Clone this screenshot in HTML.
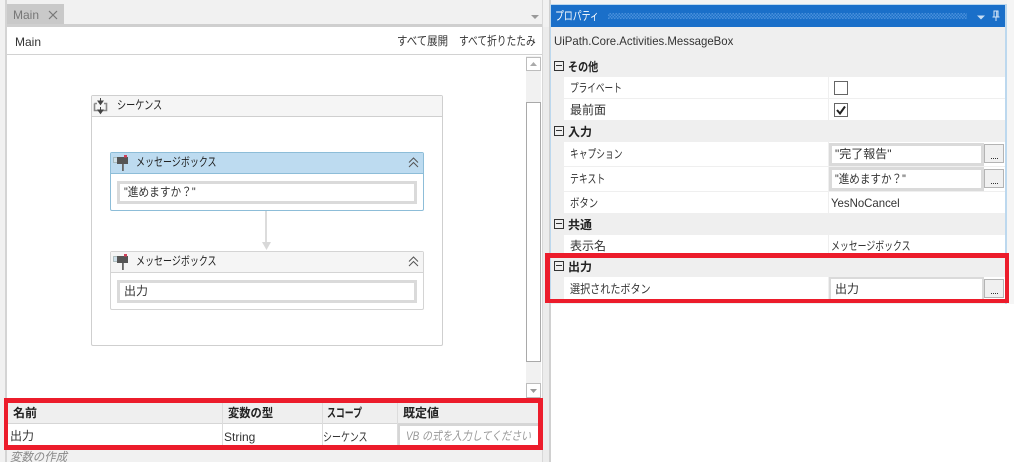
<!DOCTYPE html>
<html lang="ja"><head><meta charset="utf-8">
<style>
html,body{margin:0;padding:0;background:#fff}
#p{position:relative;width:1014px;height:462px;overflow:hidden;background:#fff;font-family:"Liberation Sans","Noto Sans CJK JP",sans-serif;font-size:12px;color:#333}
#p div,#p svg{position:absolute}
.t{white-space:nowrap;line-height:16px;transform-origin:0 0}
.b{font-weight:700;color:#222}
.g{background:#efefef}
.w{background:#fff}
.inp{background:#fff;border:3px solid #dadada;box-sizing:border-box}
.btn{background:#f0f0f0;border:1px solid #b4b4b4;box-sizing:border-box;width:20px;height:19px}
.btn:after{content:"";position:absolute;left:6px;top:13px;width:7px;height:1px;border-top:1px dotted #333}
.pm{width:10px;height:10px;border:1px solid #333;box-sizing:border-box;left:554px}
.pm:after{content:"";position:absolute;left:1px;top:3px;width:6px;height:1px;background:#333}
.red{background:#ec1c2b}
</style></head><body><div id="p">
<!-- left pane chrome -->
<div style="left:0;top:0;width:551px;height:462px;background:#f1f1f1"></div>
<div style="left:551px;top:0;width:463px;height:5px;background:#f3f3f3"></div>
<div style="left:1007px;top:0;width:7px;height:304px;background:#f5f5f5"></div>
<div style="left:5px;top:0;width:2px;height:462px;background:#d4d4d4"></div>
<div style="left:7px;top:4px;width:57px;height:20px;background:#c9c9c9"></div>
<div class="t" style="left:13px;top:7px;color:#777">Main</div>
<svg style="left:48px;top:10px" width="10" height="10"><path d="M1 1L9 9M9 1L1 9" stroke="#777" stroke-width="1.2"/></svg>
<div style="left:7px;top:24px;width:536px;height:3px;background:#cfcfcf"></div>
<svg style="left:530px;top:15px" width="10" height="6"><path d="M1 0H9L5 4Z" fill="#999"/></svg>
<div class="w" style="left:7px;top:27px;width:535px;height:423px"></div>
<div class="t" style="left:15px;top:34px">Main</div>
<div class="t" style="left:397px;top:33px;transform:scaleX(.87)">すべて展開</div>
<div class="t" style="left:459px;top:33px;transform:scaleX(.81)">すべて折りたたみ</div>
<div style="left:7px;top:54px;width:535px;height:1px;background:#d2d2d2"></div>
<div style="left:542px;top:0;width:1px;height:462px;background:#d8d8d8"></div>
<div style="left:543px;top:27px;width:6px;height:435px;background:#ececec"></div>
<div style="left:549px;top:0;width:2px;height:462px;background:#d0d0d0"></div>
<!-- scrollbar -->
<div style="left:526px;top:56px;width:15px;height:342px;background:#f1f1f1"></div>
<div style="left:526px;top:57px;width:15px;height:14px;background:#fff;border:1px solid #bdbdbd;box-sizing:border-box"></div>
<svg style="left:529px;top:61px" width="9" height="6"><path d="M1 5H8L4.500 1Z" fill="#aaa"/></svg>
<div style="left:526px;top:102px;width:15px;height:260px;background:#fff;border:1px solid #a9a9a9;box-sizing:border-box"></div>
<div style="left:526px;top:383px;width:15px;height:15px;background:#fff;border:1px solid #bdbdbd;box-sizing:border-box"></div>
<svg style="left:529px;top:388px" width="9" height="6"><path d="M1 1H8L4.500 5Z" fill="#999"/></svg>
<!-- sequence -->
<div style="left:91px;top:95px;width:352px;height:251px;border:1px solid #cfcfcf;border-radius:2px;box-sizing:border-box;background:#fff"></div>
<div style="left:92px;top:96px;width:350px;height:20px;background:#f5f5f5;border-bottom:1px solid #cfcfcf"></div>
<svg style="left:93px;top:97px" width="16" height="18"><path d="M1.500 6.500V13.500H13.500V6.500H11M4 6.500H1.500" fill="none" stroke="#888" stroke-width="1.600"/><path d="M7.500 1V5M5 4H10L7.500 7.500Z M7.500 10V14M5 13H10L7.500 16.500Z" fill="#444" stroke="#444" stroke-width="1"/></svg>
<div class="t" style="left:117px;top:97px;color:#222;transform:scaleX(.76)">シーケンス</div>
<!-- activity 1 -->
<div style="left:110px;top:152px;width:314px;height:59px;border:1px solid #8dbdd8;border-radius:2px;box-sizing:border-box;background:#fff"></div>
<div style="left:111px;top:153px;width:312px;height:20px;background:#bddbf0;border-bottom:1px solid #8dbdd8"></div>
<svg style="left:113px;top:154px" width="18" height="19"><rect x="0.500" y="3.500" width="5" height="5" fill="#cfe0ea" stroke="#9aa" stroke-width=".7"/><rect x="4" y="3" width="11" height="7" fill="#555"/><rect x="9" y="10" width="1.800" height="7" fill="#666"/><rect x="11" y="1" width="3" height="2.500" fill="#d2405a"/></svg>
<div class="t" style="left:136px;top:154px;color:#222;transform:scaleX(.75)">メッセージボックス</div>
<svg style="left:407px;top:156px" width="13" height="14"><path d="M2 6.500L6.500 2L11 6.500M2 11L6.500 6.500L11 11" fill="none" stroke="#555" stroke-width="1"/></svg>
<div class="inp" style="left:117px;top:181px;width:300px;height:23px"></div>
<div class="t" style="left:124px;top:184px;transform:scaleX(.89)">"進めますか？"</div>
<!-- arrow -->
<div style="left:265px;top:211px;width:2px;height:31px;background:#dcdcdc"></div>
<svg style="left:261px;top:241px" width="11" height="10"><path d="M1 1H10L5.500 9Z" fill="#d8d8d8"/></svg>
<!-- activity 2 -->
<div style="left:110px;top:251px;width:314px;height:59px;border:1px solid #d4d4d4;border-radius:2px;box-sizing:border-box;background:#fff"></div>
<div style="left:111px;top:252px;width:312px;height:20px;background:#f5f5f5;border-bottom:1px solid #d4d4d4"></div>
<svg style="left:113px;top:253px" width="18" height="19"><rect x="0.500" y="3.500" width="5" height="5" fill="#cfe0ea" stroke="#9aa" stroke-width=".7"/><rect x="4" y="3" width="11" height="7" fill="#555"/><rect x="9" y="10" width="1.800" height="7" fill="#666"/><rect x="11" y="1" width="3" height="2.500" fill="#d2405a"/></svg>
<div class="t" style="left:136px;top:253px;color:#222;transform:scaleX(.75)">メッセージボックス</div>
<svg style="left:407px;top:255px" width="13" height="14"><path d="M2 6.500L6.500 2L11 6.500M2 11L6.500 6.500L11 11" fill="none" stroke="#555" stroke-width="1"/></svg>
<div class="inp" style="left:117px;top:280px;width:300px;height:23px"></div>
<div class="t" style="left:124px;top:283px">出力</div>
<!-- variables -->
<div class="g" style="left:8px;top:403px;width:530px;height:20px"></div>
<div style="left:8px;top:423px;width:530px;height:1px;background:#d6d6d6"></div>
<div class="w" style="left:8px;top:424px;width:530px;height:21px"></div>
<div style="left:222px;top:403px;width:1px;height:42px;background:#dcdcdc"></div>
<div style="left:322px;top:403px;width:1px;height:42px;background:#dcdcdc"></div>
<div style="left:397px;top:403px;width:1px;height:42px;background:#dcdcdc"></div>
<div style="left:398px;top:424px;width:140px;height:2px;background:#d6d6d6"></div>
<div style="left:398px;top:424px;width:2px;height:21px;background:#d6d6d6"></div>
<div class="t b" style="left:13px;top:405px">名前</div>
<div class="t b" style="left:228px;top:405px;transform:scaleX(.94)">変数の型</div>
<div class="t b" style="left:327px;top:405px;transform:scaleX(.74)">スコープ</div>
<div class="t b" style="left:403px;top:405px">既定値</div>
<div class="t" style="left:10px;top:428px">出力</div>
<div class="t" style="left:224px;top:429px">String</div>
<div class="t" style="left:323px;top:429px;transform:scaleX(.75)">シーケンス</div>
<div class="t" style="left:406px;top:428px;color:#999;font-style:italic;transform:scaleX(.83)">VB の式を入力してください</div>
<div class="t" style="left:10px;top:449px;color:#888;font-style:italic;transform:scaleX(.95)">変数の作成</div>
<!-- properties -->
<div style="left:550px;top:4px;width:457px;height:300px;background:#bcd8ee"></div>
<div style="left:551px;top:5px;width:454px;height:22px;background:#1a6fc9"></div>
<div class="t" style="left:555px;top:8px;color:#fff;transform:scaleX(.74)">プロパティ</div>
<div style="left:608px;top:13px;width:359px;height:6px;background:repeating-conic-gradient(#4a90dc 0 25%,#1a6fc9 0 50%) 0 0/3px 3px"></div>
<svg style="left:976px;top:15px" width="10" height="6"><path d="M1 0.500H9L5 4.500Z" fill="#c9def3"/></svg>
<svg style="left:991px;top:10px" width="10" height="12"><path d="M3 1H7V7H3ZM1.500 7H8.500M5 7V11M5.700 1V7" fill="none" stroke="#d6e6f6" stroke-width="1"/></svg>
<div class="g" style="left:551px;top:27px;width:454px;height:277px"></div>
<div class="t" style="left:554px;top:33px;transform:scaleX(.95)">UiPath.Core.Activities.MessageBox</div>
<div class="w" style="left:564px;top:77px;width:441px;height:21px"></div>
<div class="w" style="left:564px;top:99px;width:441px;height:21px"></div>
<div class="w" style="left:564px;top:142px;width:441px;height:24px"></div>
<div class="w" style="left:564px;top:167px;width:441px;height:24px"></div>
<div class="w" style="left:564px;top:192px;width:441px;height:21px"></div>
<div class="w" style="left:564px;top:235px;width:441px;height:21px"></div>
<div class="w" style="left:564px;top:277px;width:441px;height:23px"></div>
<div style="left:828px;top:77px;width:1px;height:223px;background:#efefef"></div>
<div class="g" style="left:564px;top:120px;width:441px;height:22px"></div>
<div class="g" style="left:564px;top:213px;width:441px;height:22px"></div>
<div class="g" style="left:564px;top:258px;width:441px;height:19px"></div>
<div class="pm" style="top:61px"></div>
<div class="t b" style="left:568px;top:59px;transform:scaleX(.84)">その他</div>
<div class="t" style="left:570px;top:80px;transform:scaleX(.72)">プライベート</div>
<div class="t" style="left:570px;top:102px">最前面</div>
<div class="pm" style="top:126px"></div>
<div class="t b" style="left:568px;top:124px">入力</div>
<div class="t" style="left:570px;top:146px;transform:scaleX(.73)">キャプション</div>
<div class="t" style="left:570px;top:171px;transform:scaleX(.74)">テキスト</div>
<div class="t" style="left:570px;top:195px;transform:scaleX(.78)">ボタン</div>
<div class="pm" style="top:219px"></div>
<div class="t b" style="left:568px;top:217px">共通</div>
<div class="t" style="left:570px;top:238px">表示名</div>
<div class="pm" style="top:261px"></div>
<div class="t b" style="left:568px;top:259px">出力</div>
<div class="t" style="left:570px;top:281px;transform:scaleX(.84)">選択されたボタン</div>
<div style="left:834px;top:81px;width:14px;height:14px;border:1px solid #666;box-sizing:border-box;background:#fff"></div>
<div style="left:834px;top:103px;width:14px;height:14px;border:1px solid #666;box-sizing:border-box;background:#fff"></div>
<svg style="left:835px;top:104px" width="12" height="12"><path d="M2 6L5 9.500L10 2.500" fill="none" stroke="#222" stroke-width="2"/></svg>
<div class="inp" style="left:829px;top:143px;width:155px;height:23px"></div>
<div class="inp" style="left:829px;top:167px;width:155px;height:24px"></div>
<div class="inp" style="left:829px;top:277px;width:155px;height:23px;border-width:2px 2px 0 2px"></div>
<div class="btn" style="left:984px;top:144px"></div>
<div class="btn" style="left:984px;top:169px"></div>
<div class="btn" style="left:984px;top:279px"></div>
<div class="t" style="left:835px;top:146px">"完了報告"</div>
<div class="t" style="left:835px;top:171px;transform:scaleX(.88)">"進めますか？"</div>
<div class="t" style="left:831px;top:195px;transform:scaleX(.95)">YesNoCancel</div>
<div class="t" style="left:831px;top:238px;transform:scaleX(.74)">メッセージボックス</div>
<div class="t" style="left:835px;top:281px">出力</div>
<!-- red boxes -->
<div class="red" style="left:4px;top:398px;width:539px;height:5px"></div>
<div class="red" style="left:4px;top:445px;width:539px;height:5px"></div>
<div class="red" style="left:4px;top:398px;width:4px;height:52px"></div>
<div class="red" style="left:538px;top:398px;width:5px;height:52px"></div>
<div class="red" style="left:545px;top:253px;width:464px;height:5px"></div>
<div class="red" style="left:545px;top:299px;width:464px;height:4px"></div>
<div class="red" style="left:545px;top:253px;width:5px;height:50px"></div>
<div class="red" style="left:1005px;top:253px;width:4px;height:50px"></div>
</div></body></html>
